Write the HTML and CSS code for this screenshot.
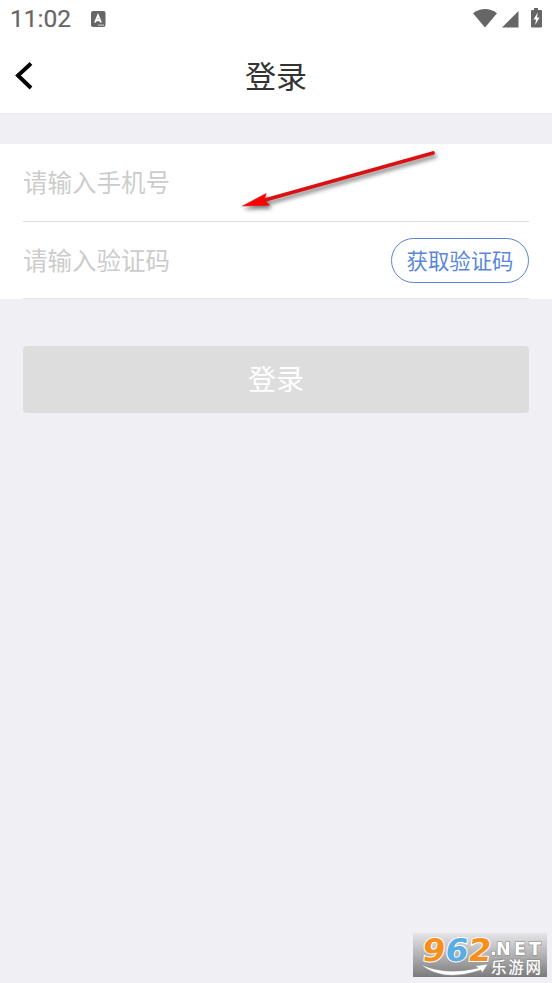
FILE: index.html
```html
<!DOCTYPE html>
<html lang="zh-CN">
<head>
<meta charset="utf-8">
<title>登录</title>
<link rel="stylesheet" href="styles.css">
</head>
<body>
<main class="screen">
  <div class="status">
    <span class="time">11:02</span>
    <svg class="keyboard" width="15" height="17" viewBox="0 0 15 17"><rect width="14.5" height="16" rx="2" fill="#666"/><path d="M4 11.500 7 4.500l3 7M5.200 9.200h3.600" fill="none" stroke="#fff" stroke-width="1.900"/><path d="M7.500 14.200h5.500" stroke="#fff" stroke-width="1.200" stroke-dasharray="1.200 .8"/></svg>
    <svg class="signals" width="72" height="22" viewBox="0 0 72 22"><path d="M2 5.200Q14-3 26 5.200L14 19.500Z" fill="#666"/><path d="M47.500 3v16.500H31Z" fill="#666"/><path d="M63 0h4v2h3q1 0 1 1v15.500q0 1-1 1h-9q-1 0-1-1V3q0-1 1-1h2Z" fill="#666"/><path d="m66.700 4.500-4.200 7h2.500l-.8 5.500 4.300-7.500h-2.500Z" fill="#fff"/></svg>
  </div>
  <header class="header">
    <svg class="back" width="20" height="30" viewBox="0 0 20 30"><path d="M18 2.500 5 14.500l13 12.500" fill="none" stroke="#000" stroke-width="3.900"/></svg>
    <h1 class="title">登录</h1>
  </header>
  <form class="form">
    <div class="fields">
      <div class="field"><span class="placeholder">请输入手机号</span></div>
      <div class="field"><span class="placeholder">请输入验证码</span><button class="code" type="button">获取验证码</button></div>
    </div>
    <button class="submit" type="button">登录</button>
  </form>
  <svg class="arrow" width="220" height="80" viewBox="0 0 220 80"><path d="M35 50 203 3" stroke="#dc1010" stroke-width="3.700" stroke-linecap="round"/><path d="M12.500 56 36 43.500l-1.500 6.500 5 5.200Z" fill="#f00" stroke="#e01010" stroke-width=".6"/></svg>
  <svg class="watermark" width="134" height="44" viewBox="0 0 134 44">
    <defs><linearGradient id="plate" x2="0" y2="1"><stop stop-color="#e5e5e7"/><stop offset=".5" stop-color="#b2b2b3"/><stop offset="1" stop-color="#7b7b7c"/></linearGradient></defs>
    <rect width="134" height="44" fill="url(#plate)"/>
    <path d="M7 31Q31 43 65 35l-3-2 13-2-6 9-1-3Q29 50 7 31Z" fill="#fff" stroke="#888" stroke-width=".5"/>
    <g class="digits" transform="translate(0 27.500) skewX(-8)"><text x="8" y="0" textLength="23" lengthAdjust="spacingAndGlyphs" fill="#f5901e">9</text><text x="31" y="0" textLength="23" lengthAdjust="spacingAndGlyphs" fill="#58ade2">6</text><text x="54" y="0" textLength="23" lengthAdjust="spacingAndGlyphs" fill="#f5901e">2</text></g>
    <text class="domain" y="22"><tspan x="77">.</tspan><tspan x="83">N</tspan><tspan x="101">E</tspan><tspan x="116">T</tspan></text>
    <text class="site" x="78" y="39.500" textLength="50">乐游网</text>
  </svg>
</main>
</body>
</html>
```
FILE: styles.css
```css
* { box-sizing: border-box; }
body { margin: 0; font-family: "Noto Sans CJK SC", sans-serif; }
.screen { position: relative; height: 983px; overflow: hidden; background: #efeff4; }
.status { display: flex; align-items: center; height: 38px; padding: 0 9px 0 10px; background: #fff; }
.time { width: 81px; font: 400 24.5px/38px Roboto, sans-serif; color: #666; -webkit-text-stroke: .2px #666; }
.signals { margin-left: auto; }
.header { display: grid; grid-template-columns: 80px 1fr 80px; align-items: center; height: 76px; border-bottom: 1px solid #ebebf0; background: #fff; }
.back { margin-left: 13px; }
.title { margin: 0; padding-bottom: 2px; text-align: center; font-size: 31px; font-weight: 400; line-height: 72px; color: #333; }
.fields { height: 155px; margin-top: 30px; padding: 0 23px; background: #fff; }
.field { display: flex; align-items: center; justify-content: space-between; height: 78px; border-bottom: 1px solid #dedede; }
.field:last-child { height: 77px; border-color: #e5e5e8; }
.placeholder { padding-bottom: 2px; font-size: 24.5px; font-weight: 400; color: #ccc; }
.code { width: 138px; height: 45px; padding: 0 0 2px; border: 1px solid #5b83d4; border-radius: 23px; background: #fff; font: 400 21.4px/41px "Noto Sans CJK SC", sans-serif; color: #5b87da; }
.submit { display: block; width: calc(100% - 46px); height: 67px; margin: 47px 23px 0; padding: 0 0 2px; border: 0; border-radius: 4px; background: #ddd; font: 400 28px/65px "Noto Sans CJK SC", sans-serif; color: #fff; }
.arrow { position: absolute; left: 230px; top: 150px; overflow: visible; filter: drop-shadow(2px 3px 2px #0008); }
.watermark { position: absolute; left: 413px; top: 933px; }
.digits { font: 700 31px "DejaVu Sans", sans-serif; stroke: #fff; stroke-width: 2px; paint-order: stroke; }
.domain { font: 700 17.5px "DejaVu Sans", sans-serif; fill: #fff; stroke: #888; stroke-width: 1.2px; paint-order: stroke; }
.site { font: 500 15.500px "Noto Sans CJK SC", sans-serif; fill: #fff; stroke: #888; stroke-width: 1.200px; paint-order: stroke; }
```
